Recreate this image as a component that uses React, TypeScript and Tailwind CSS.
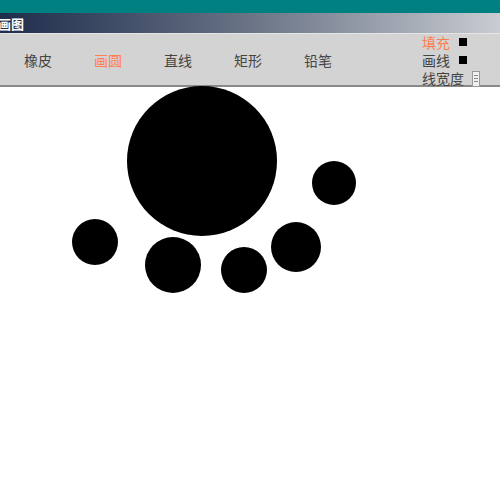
import React from "react";

const tools = ["橡皮", "画圆", "直线", "矩形", "铅笔"];

const circles = [
  { x: 202, y: 161, r: 75 },
  { x: 334, y: 183, r: 22 },
  { x: 95, y: 242, r: 23 },
  { x: 173, y: 265, r: 28 },
  { x: 244, y: 270, r: 23 },
  { x: 296, y: 247, r: 25 },
];

export default function App() {
  const active = "画圆";
  return (
    <div className="w-[500px] h-[500px] bg-white overflow-hidden flex flex-col" style={{ fontFamily: '"Noto Sans CJK SC", sans-serif' }}>
      <div className="h-[13px] bg-[#008080]" />
      {/* title bar */}
      <div className="h-[20px] bg-gradient-to-r from-[#1f2d4c] via-[#6a7486] to-[#c9ccd2] flex items-center overflow-hidden">
        <span className="-ml-[2px] text-white text-[13px] font-bold leading-none">画图</span>
      </div>
      {/* toolbar */}
      <div className="h-[54px] bg-[#d3d3d3] border-t border-[#e6e6e6] border-b-2 border-b-[#8a8a8a] flex items-center">
        <div className="flex pl-[3px]">
          {tools.map((t) => (
            <div
              key={t}
              className={`w-[70px] text-center text-[14px] mt-[1px] ${t === active ? "text-[#ff7f50]" : "text-[#444]"}`}
            >
              {t}
            </div>
          ))}
        </div>
        <div className="ml-[69px] flex flex-col text-[14px] leading-[18px]">
          <div className="h-[18px] flex items-center gap-[9px]">
            <span className="text-[#ff7f50]">填充</span>
            <span className="w-[8px] h-[8px] bg-black" />
          </div>
          <div className="h-[18px] flex items-center gap-[9px]">
            <span className="text-[#444]">画线</span>
            <span className="w-[8px] h-[8px] bg-black" />
          </div>
          <div className="h-[18px] flex items-center gap-[8px]">
            <span className="text-[#444]">线宽度</span>
            <span className="w-[8px] h-[16px] mt-[2px] bg-[#f0f0f0] border border-[#999] flex flex-col justify-center items-center gap-[2px]">
              <span className="w-[4px] h-px bg-[#888]" />
              <span className="w-[4px] h-px bg-[#888]" />
              <span className="w-[4px] h-px bg-[#888]" />
            </span>
          </div>
        </div>
      </div>
      {/* canvas */}
      <div className="relative flex-1 bg-white">
        {circles.map((c, i) => (
          <div
            key={i}
            className="absolute rounded-full bg-black"
            style={{ left: c.x - c.r, top: c.y - c.r - 87, width: c.r * 2, height: c.r * 2 }}
          />
        ))}
      </div>
    </div>
  );
}
